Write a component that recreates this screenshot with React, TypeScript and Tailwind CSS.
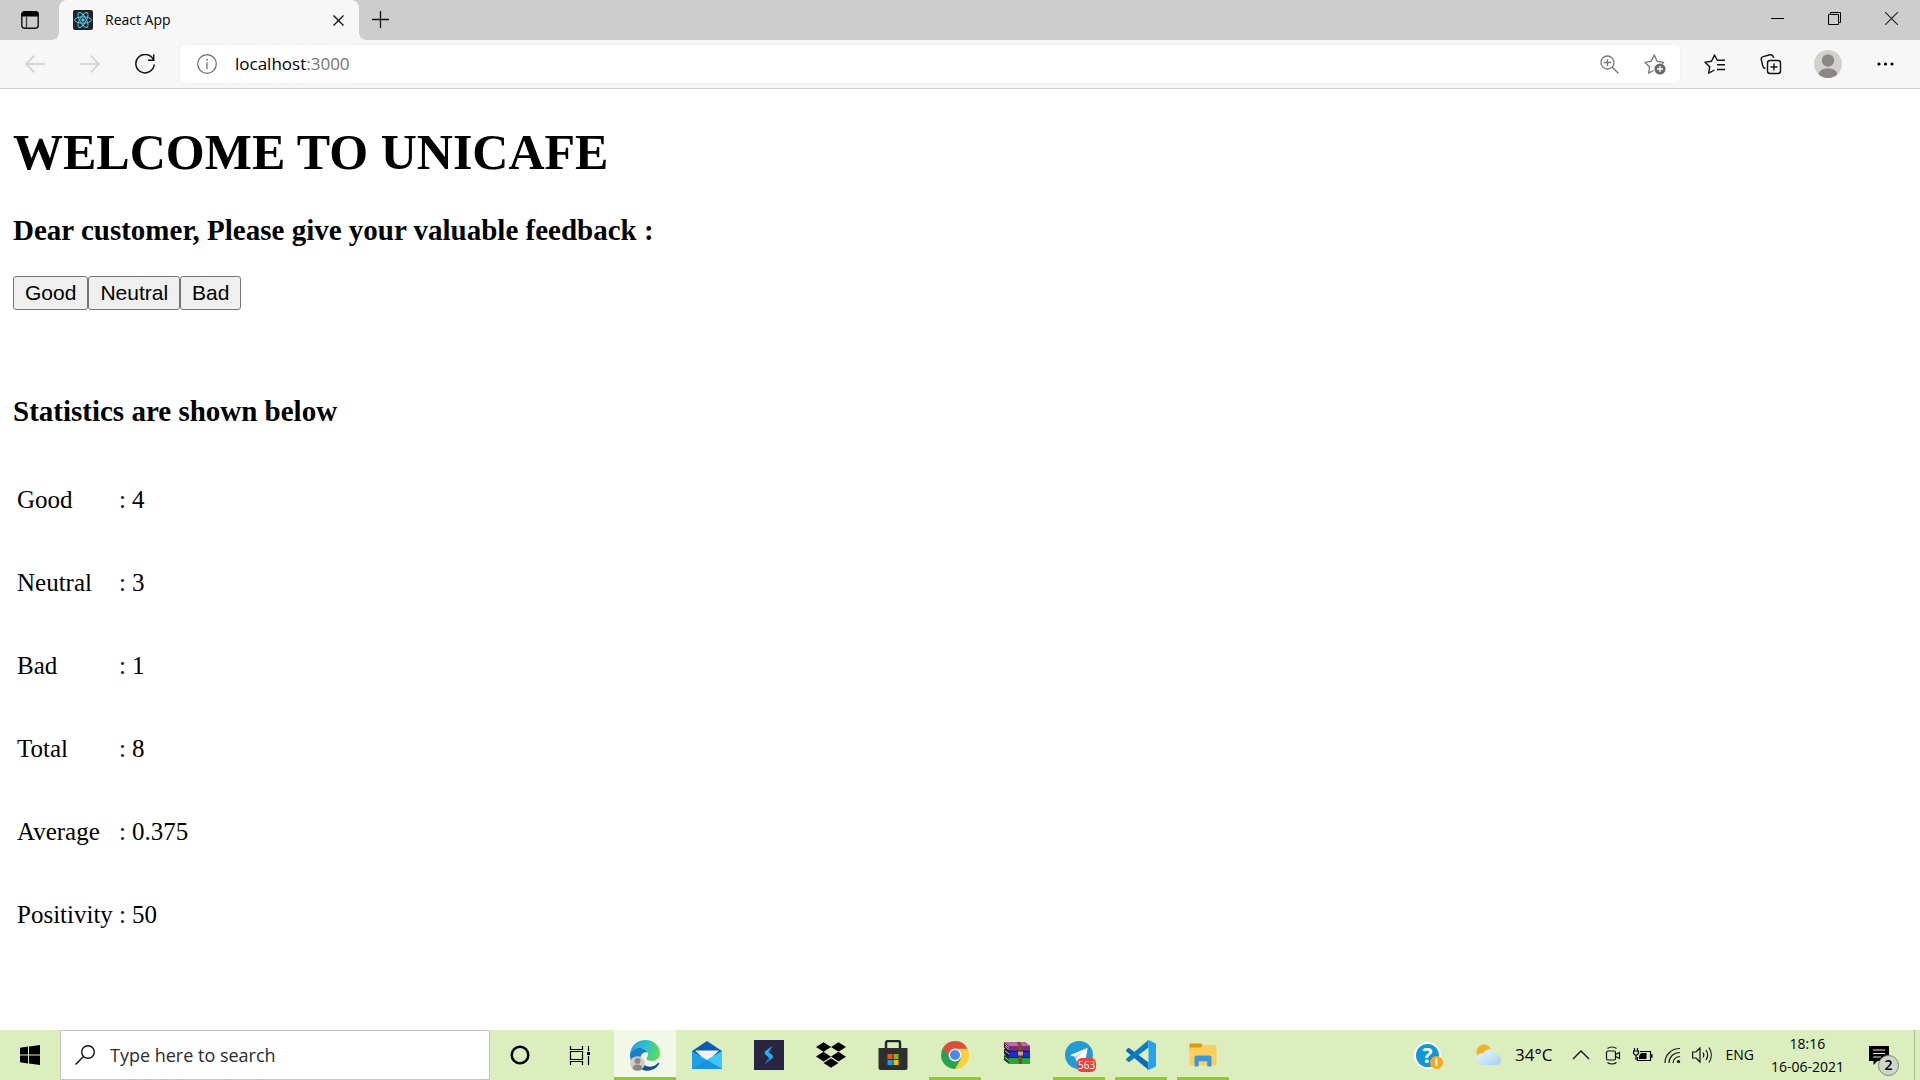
import React, { useState } from "react";
import type { ReactNode } from "react";
import { FaDropbox } from "react-icons/fa";

const ui = "font-['Open_Sans','Noto_Sans',sans-serif]";

function ReactLogo() {
  return (
    <svg width="20" height="20" viewBox="0 0 20 20" fill="none" stroke="#5ac8e6" strokeWidth="1" aria-hidden="true">
      <rect width="20" height="20" rx="2" fill="#20232a" stroke="none" />
      <ellipse cx="10" cy="10" rx="8.4" ry="3.2" />
      <ellipse cx="10" cy="10" rx="8.4" ry="3.2" transform="rotate(60 10 10)" />
      <ellipse cx="10" cy="10" rx="8.4" ry="3.2" transform="rotate(120 10 10)" />
      <circle cx="10" cy="10" r="1.7" fill="#5ac8e6" stroke="none" />
    </svg>
  );
}

function TabStrip() {
  return (
    <header className="flex h-10 items-start bg-[#cdcdcd]">
      <button aria-label="Tab actions" className="flex h-10 w-[59px] items-center justify-center">
        <svg width="18" height="18" viewBox="0 0 18 18" fill="none" aria-hidden="true">
          <rect x="0.8" y="0.8" width="16.4" height="16.4" rx="2.6" stroke="#111" strokeWidth="1.4" />
          <path d="M.5 5.5V3A2.5 2.5 0 0 1 3 .5h12A2.5 2.5 0 0 1 17.500 3v2.500z" fill="#000" />
          <path d="M5.500 5.500V17" stroke="#333" strokeWidth="1.200" />
        </svg>
      </button>
      <div className="relative flex h-10 w-[300px] items-center rounded-t-lg bg-[#f7f7f7] pr-[15px] pl-[14px]">
        <span className="absolute bottom-0 -left-1.5 size-1.5 bg-[radial-gradient(circle_at_0_0,transparent_5px,#f7f7f7_6px)]" />
        <span className="absolute -right-1.5 bottom-0 size-1.5 bg-[radial-gradient(circle_at_100%_0,transparent_5px,#f7f7f7_6px)]" />
        <ReactLogo />
        <span className="ml-3 flex-1 text-[14px] leading-5 text-black">React App</span>
        <button aria-label="Close tab" className="flex size-3 items-center justify-center">
          <svg width="11" height="11" viewBox="0 0 11 11" stroke="#111" strokeWidth="1.4" aria-hidden="true">
            <path d="M.5.5l10 10M10.500.5l-10 10" />
          </svg>
        </button>
      </div>
      <button aria-label="New tab" className="flex h-[39px] w-[43px] items-center justify-center">
        <svg width="17" height="17" viewBox="0 0 17 17" stroke="#111" strokeWidth="1.300" aria-hidden="true">
          <path d="M8.500 0v17M0 8.500h17" />
        </svg>
      </button>
      <div className="ml-auto flex h-[37px]">
        <button aria-label="Minimize" className="flex w-[57px] items-center justify-center">
          <svg width="13" height="13" viewBox="0 0 13 13" stroke="#000" aria-hidden="true"><path d="M0 6.500h13" /></svg>
        </button>
        <button aria-label="Restore" className="flex w-[57px] items-center justify-center">
          <svg width="13" height="13" viewBox="0 0 13 13" stroke="#000" fill="none" aria-hidden="true">
            <path d="M.5 2.500h10v10h-10zM2.500 2.500v-2h10v10h-2" />
          </svg>
        </button>
        <button aria-label="Close window" className="flex w-[57px] items-center justify-center">
          <svg width="13" height="13" viewBox="0 0 13 13" stroke="#222" strokeWidth="1.1" aria-hidden="true">
            <path d="M0 0l13 13M13 0L0 13" />
          </svg>
        </button>
      </div>
    </header>
  );
}

function ToolButton({ label, children, wide }: { label: string; children: ReactNode; wide?: boolean }) {
  return (
    <button aria-label={label} className={wide ? "flex h-full w-14 items-center justify-center" : "flex h-full w-[55px] items-center justify-center"}>
      {children}
    </button>
  );
}

function Toolbar() {
  return (
    <nav aria-label="Browser toolbar" className="flex h-[49px] items-center border-b border-[#cfcfcf] bg-[#f7f7f7] px-[7px]">
      <ToolButton label="Back">
        <svg width="20" height="18" viewBox="0 0 20 18" fill="none" stroke="#cbcbcb" strokeWidth="1.300" aria-hidden="true">
          <path d="M9.500.5L1 9l8.500 8.500M1 9h19" />
        </svg>
      </ToolButton>
      <ToolButton label="Forward">
        <svg width="20" height="18" viewBox="0 0 20 18" fill="none" stroke="#cbcbcb" strokeWidth="1.300" aria-hidden="true">
          <path d="M10.500.5L19 9l-8.500 8.500M19 9H0" />
        </svg>
      </ToolButton>
      <ToolButton label="Refresh">
        <svg width="20" height="20" viewBox="0 0 20 20" fill="none" stroke="#111" strokeWidth="1.500" aria-hidden="true">
          <path d="M18.500 6A9.200 9.200 0 1 0 19.200 10.500M18.700 0.500V6.200H13" />
        </svg>
      </ToolButton>
      <div className="mr-[7px] ml-2 flex h-[38px] min-w-0 flex-1 items-center rounded-[5px] bg-white pr-[14px] pl-[17px] shadow-[0_0_3px_rgba(0,0,0,0.06)]">
        <svg width="20" height="20" viewBox="0 0 20 20" fill="none" stroke="#666" strokeWidth="1.200" aria-hidden="true">
          <circle cx="10" cy="10" r="9.300" />
          <path d="M10 8.500v6.500" />
          <circle cx="10" cy="5.700" r="0.900" fill="#666" stroke="none" />
        </svg>
        <a href="#" aria-label="Address localhost:3000" className="ml-[18px] flex-1 text-[17px] leading-6 text-black">
          localhost<span className="text-[#767676]">:3000</span>
        </a>
        <button aria-label="Zoom">
          <svg width="19" height="19" viewBox="0 0 19 19" fill="none" stroke="#777" strokeWidth="1.300" aria-hidden="true">
            <circle cx="7.500" cy="7.500" r="6.500" />
            <path d="M12.300 12.300l6 6M7.500 4v7M4 7.500h7" />
          </svg>
        </button>
        <button aria-label="Add to favorites" className="ml-[25px]">
          <svg width="22" height="22" viewBox="0 0 22 22" fill="none" stroke="#777" strokeWidth="1.300" strokeLinejoin="round" aria-hidden="true">
            <path d="M9.500 17.500l-4.900 2.600 1-6.100L1 9.300l6-.9L10.300 2l2.900 6.400 6.500.9-1.500 1.400" />
            <circle cx="16" cy="16" r="5.600" fill="#6b6b6b" stroke="none" />
            <path d="M16 13v6M13 16h6" stroke="#fff" />
          </svg>
        </button>
      </div>
      <ToolButton label="Favorites" wide>
        <svg width="22" height="22" viewBox="0 0 22 22" fill="none" stroke="#111" strokeWidth="1.400" strokeLinejoin="round" aria-hidden="true">
          <path d="M10.500 17l-5.900 3.200 1.100-6.500L1 9.200l6.500-.9L10.500 2l2.900 5.300M13 7.300h8M13 11.800h8M13 16.500h8" />
        </svg>
      </ToolButton>
      <ToolButton label="Collections" wide>
        <svg width="22" height="22" viewBox="0 0 22 22" fill="none" stroke="#111" strokeWidth="1.400" aria-hidden="true">
          <rect x="7.500" y="7.500" width="13" height="13" rx="2.500" />
          <path d="M14 10.500v7M10.500 14h7M5.500 15.500c-1.600-.2-2.200-1-2.600-2.300L1.300 6.800C.9 5.200 1.700 4 3.200 3.600L10 1.800c1.600-.4 2.900.3 3.400 2.200l.2.900" />
        </svg>
      </ToolButton>
      <button aria-label="Profile" className="flex h-full w-[58px] items-center justify-center">
        <svg width="28" height="28" viewBox="0 0 28 28" aria-hidden="true">
          <defs><clipPath id="profileClip"><circle cx="14" cy="14" r="14" /></clipPath></defs>
          <g clipPath="url(#profileClip)">
            <rect width="28" height="28" fill="#d3d1cd" />
            <circle cx="14" cy="10.500" r="6.200" fill="#8c8783" />
            <path d="M4 28c0-6 3-9.800 10-9.800S24 22 24 28z" fill="#8c8783" />
          </g>
        </svg>
      </button>
      <ToolButton label="Settings and more" wide>
        <svg width="17" height="4" viewBox="0 0 17 4" aria-hidden="true">
          <circle cx="2" cy="2" r="1.600" /><circle cx="8.500" cy="2" r="1.600" /><circle cx="15" cy="2" r="1.600" />
        </svg>
      </ToolButton>
    </nav>
  );
}

const feedbackClass =
  "h-[34px] rounded-[3px] border border-[#767676] bg-[#efefef] px-[11px] font-['Liberation_Sans',Arial,sans-serif] text-[21px] leading-6";

function Unicafe() {
  const [good, setGood] = useState(4);
  const [neutral, setNeutral] = useState(3);
  const [bad, setBad] = useState(1);
  const total = good + neutral + bad;
  const stats: [string, number][] = [
    ["Good", good],
    ["Neutral", neutral],
    ["Bad", bad],
    ["Total", total],
    ["Average", (good - bad) / total],
    ["Positivity", (good / total) * 100],
  ];
  return (
    <main className="flex-1 bg-white px-[13px] pt-[34px] pb-12 font-['Liberation_Serif','Times_New_Roman',serif] text-black">
      <h1 className="text-[50px] leading-[58px] font-bold">WELCOME TO UNICAFE</h1>
      <h3 className="mt-[33px] text-[29px] leading-[33px] font-bold">Dear customer, Please give your valuable feedback :</h3>
      <div className="mt-[29px] flex">
        <button className={feedbackClass} onClick={() => setGood(good + 1)}>Good</button>
        <button className={feedbackClass} onClick={() => setNeutral(neutral + 1)}>Neutral</button>
        <button className={feedbackClass} onClick={() => setBad(bad + 1)}>Bad</button>
      </div>
      <h3 className="mt-[85px] text-[29px] leading-[33px] font-bold">Statistics are shown below</h3>
      <table className="mt-[30px] text-[25px] leading-[29px]">
        <tbody>
          {stats.map(([name, value]) => (
            <tr key={name}>
              <th scope="row" className="py-[27px] pl-1 text-left font-normal">{name}</th>
              <td className="py-[27px] pl-1.5">: {value}</td>
            </tr>
          ))}
        </tbody>
      </table>
    </main>
  );
}

function EdgeIcon() {
  return (
    <svg width="32" height="32" viewBox="0 0 32 32" aria-hidden="true">
      <defs>
        <linearGradient id="edgeTop" x1="0" y1="0.3" x2="1" y2="0.6">
          <stop offset="0" stopColor="#259fdc" /><stop offset="0.5" stopColor="#31c4c4" /><stop offset="1" stopColor="#62dc52" />
        </linearGradient>
      </defs>
      <path d="M1 15C2 6 8.500 1 16.500 1 25 1 31 7 31 14c0 5-3.500 8-8 8-3.500 0-5.500-1.300-5.500-2.500 0-1 1.500-1.500 1.500-4C19 12 16 9 11 9 6 9 2 11.500 1 15z" fill="url(#edgeTop)" />
      <path d="M1 15c1-3.500 4.800-6 9.500-6 4 0 7 2 8 4.500-4-1-7 2-7 6 0 6 5.500 11 10 11.300C18 32 15 31.500 12 30.500 5 28 .5 22 1 15z" fill="#1680d0" />
      <path d="M11.500 18c-.5 7 6 10.500 11 9.500 3-.5 5-2 6.500-3.500 1-.8 1.500.2 1 1C27.500 29.500 22.500 32 17 31.500c-6-.5-9-7-5.500-13.500z" fill="#0c4f9c" />
      <circle cx="8.500" cy="24.500" r="7.300" fill="#cfcdca" />
      <circle cx="8.500" cy="22" r="3" fill="#8c8783" />
      <path d="M3.500 29.700c.3-3 2-4.200 5-4.200s4.700 1.200 5 4.200a7.300 7.300 0 0 1-10 0z" fill="#8c8783" />
    </svg>
  );
}

function MailIcon() {
  return (
    <svg width="30" height="30" viewBox="0 0 30 30" aria-hidden="true">
      <path d="M0 11L15 1l15 10v5H0z" fill="#0a5cb2" />
      <path d="M3 10.500h24L15 22z" fill="#f2f2f2" />
      <path d="M0 11v18h30V11L15 20z" fill="#1ea0e8" />
      <path d="M30 11v18L15 20z" fill="#3dc8f5" />
      <path d="M0 29l15-9 15 9z" fill="#1d93df" />
    </svg>
  );
}

function BoltIcon() {
  return (
    <svg width="30" height="30" viewBox="0 0 30 30" aria-hidden="true">
      <rect width="30" height="30" fill="#292541" />
      <path d="M18.500 6l-7 5c-1.500 1.500-1 3 .5 4l3 2.500-4 6.500 6.500-5c2-1.700 2-3 0-4.500L15 12.500z" fill="#28b3ef" />
      <path d="M18.500 6l-4.500 5.500 1 1zM11 24l3.500-5.500 1-1 1 2z" fill="#2a62c4" />
    </svg>
  );
}

function StoreIcon() {
  return (
    <svg width="30" height="30" viewBox="0 0 30 30" aria-hidden="true">
      <path d="M8 10V3a2 2 0 0 1 2-2h10a2 2 0 0 1 2 2v7" fill="none" stroke="#1f2a2a" strokeWidth="2.500" />
      <path d="M.5 8h29v20a2 2 0 0 1-2 2h-25a2 2 0 0 1-2-2z" fill="#2e2e2e" />
      <path d="M9.500 14h5v5h-5z" fill="#f25022" /><path d="M15.500 14h5v5h-5z" fill="#7fba00" />
      <path d="M9.500 20h5v5h-5z" fill="#00a4ef" /><path d="M15.500 20h5v5h-5z" fill="#ffb900" />
    </svg>
  );
}

function ChromeIcon() {
  return (
    <svg width="28" height="28" viewBox="0 0 28 28" aria-hidden="true">
      <circle cx="14" cy="14" r="14" fill="#fbce3b" />
      <path d="M14 14L1.900 7A14 14 0 0 0 14 28l6-10.500z" fill="#27a152" />
      <path d="M14 7.700h12.500A14 14 0 0 0 1.900 7L8.500 17.200z" fill="#d94f40" />
      <circle cx="14" cy="14" r="6.400" fill="#f5f5f5" />
      <circle cx="14" cy="14" r="5" fill="#4a88ef" />
    </svg>
  );
}

function WinrarIcon() {
  return (
    <svg width="28" height="28" viewBox="0 0 28 28" aria-hidden="true">
      <path d="M1 1h21l5 4v5H6L1 6z" fill="#7e2a78" /><path d="M1 1h21l5 4H6z" fill="#b868b0" />
      <path d="M1 8h5v9H3z" fill="#162055" /><path d="M6 10h21v6H6z" fill="#1a2cd8" />
      <path d="M1 14l5 2v7l-5-4z" fill="#0c4d20" /><path d="M6 16.500h21V23H6z" fill="#1fae35" />
      <path d="M1 2l5 4v4L1 7zM1 9l5 4v3l-5-3z" fill="#2b1535" />
      <path d="M2 3.500l4 3M2 5.500l4 3M2 10l4 3M2 16.500l4 3" stroke="#ded8d8" strokeWidth="0.900" />
      <path d="M6 10.300h21M6 16.600h21" stroke="#101030" />
      <path d="M14 1h3l2 4v18h-3.500V5z" fill="#7a4d20" />
      <rect x="14.500" y="10" width="6" height="5" fill="#c1a780" stroke="#3b250f" />
    </svg>
  );
}

function TelegramIcon() {
  return (
    <span className="relative block size-7">
      <svg width="28" height="28" viewBox="0 0 28 28" aria-hidden="true">
        <circle cx="14" cy="14" r="14" fill="#269bd3" />
        <path d="M5 14.200L21.500 7.300c.8-.3 1.200.1 1 1L20 20.500c-.2.900-.8 1.100-1.500.6l-4-3-2 2c-.5.500-1 .4-1.200-.3L10 15.800z" fill="#fff" />
        <path d="M10 15.800l9-6-7 7-.7 3z" fill="#bcd9ec" />
      </svg>
      <span className="absolute top-[17px] left-3 rounded-[5px] bg-[#f23c34] px-[1px] text-[10px] leading-[14px] text-white">563</span>
    </span>
  );
}

function CodeIcon() {
  return (
    <svg width="30" height="30" viewBox="0 0 30 30" aria-hidden="true">
      <path d="M0 10.200l2-1.900c.5-.4 1-.4 1.500-.1L22.500 22.500V30L.2 11.300c-.3-.3-.4-.8-.2-1.100z" fill="#0b6db5" />
      <path d="M0 19.800l2 1.900c.5.4 1 .4 1.500.1L22.500 7.500V0L.2 18.700c-.3.300-.4.800-.2 1.100z" fill="#0d7dc9" />
      <path d="M22.500 0L29 3c.6.300 1 .9 1 1.600v20.800c0 .7-.4 1.300-1 1.600L22.500 30c-.8.200-1.500 0-2-.5.800.8 2 .2 2-.8V1.300c0-1-1.200-1.600-2-.8.500-.5 1.200-.7 2-.5z" fill="#26a1ee" />
    </svg>
  );
}

function ExplorerIcon() {
  return (
    <svg width="28" height="24" viewBox="0 0 28 24" aria-hidden="true">
      <path d="M.5 1.500a1 1 0 0 1 1-1H12l1.500 1.500V7H.5z" fill="#dc9a06" />
      <path d="M.5 4.500H12l2.500-2.500H26a1.500 1.500 0 0 1 1.500 1.500v19H.5z" fill="#fccf5c" />
      <path d="M5.500 23.500v-9a2 2 0 0 1 2-2h13a2 2 0 0 1 2 2v9h-4.200v-5.200H9.700v5.200z" fill="#3d95dc" />
    </svg>
  );
}

const apps: { name: string; icon: ReactNode; open?: boolean; active?: boolean }[] = [
  { name: "Microsoft Edge", icon: <EdgeIcon />, open: true, active: true },
  { name: "Mail", icon: <MailIcon /> },
  { name: "Shortcut tool", icon: <BoltIcon /> },
  { name: "Dropbox", icon: <FaDropbox size={30} color="#000" /> },
  { name: "Microsoft Store", icon: <StoreIcon /> },
  { name: "Google Chrome", icon: <ChromeIcon />, open: true },
  { name: "WinRAR", icon: <WinrarIcon /> },
  { name: "Telegram", icon: <TelegramIcon />, open: true },
  { name: "Visual Studio Code", icon: <CodeIcon />, open: true },
  { name: "File Explorer", icon: <ExplorerIcon />, open: true },
];

function Taskbar() {
  return (
    <footer className={`flex h-[50px] shrink-0 items-center bg-[#dceebe] text-black ${ui}`}>
      <button aria-label="Start" className="flex h-full w-[60px] items-center justify-center">
        <svg width="20" height="20" viewBox="0 0 20 20" aria-hidden="true">
          <path d="M0 2.800L8 1.500v8H0zM9 1.400L20 0v9.500H9zM0 10.500h8v8L0 17.300zM9 10.500h11V20L9 18.600z" />
        </svg>
      </button>
      <label className="flex h-full w-[430px] items-center border border-[#c5c5c5] bg-white pl-[14px]">
        <svg width="20" height="20" viewBox="0 0 20 20" fill="none" stroke="#111" strokeWidth="1.400" aria-hidden="true">
          <circle cx="13" cy="7" r="6.300" /><path d="M8.500 11.500L.5 19.500" />
        </svg>
        <input type="text" aria-label="Search" placeholder="Type here to search" className="ml-[15px] min-w-0 flex-1 text-[18px] leading-6 outline-none placeholder:text-[#2c2c2c]" />
      </label>
      <button aria-label="Cortana" className="flex h-full w-[60px] items-center justify-center">
        <svg width="20" height="20" viewBox="0 0 20 20" fill="none" aria-hidden="true"><circle cx="10" cy="10" r="8.300" stroke="#000" strokeWidth="2.500" /></svg>
      </button>
      <button aria-label="Task view" className="mr-1 flex h-full w-[60px] items-center justify-center">
        <svg width="22" height="19" viewBox="0 0 22 19" fill="none" stroke="#000" strokeWidth="1.200" aria-hidden="true">
          <path d="M1.500 0v3.500h12V0M1.500 19v-3.500h12V19M1.500 5.500h12v8h-12zM19.500 0v5M19.500 10v9" />
          <path d="M18 6h3v3h-3z" fill="#000" stroke="none" />
        </svg>
      </button>
      <div className="flex h-full">
        {apps.map((app) => (
          <button
            key={app.name}
            aria-label={app.name}
            className={app.active ? "relative flex h-full w-[62px] items-center justify-center bg-[#f2f8e7]" : "relative flex h-full w-[62px] items-center justify-center"}
          >
            {app.icon}
            {app.open && (
              <span className={app.active ? "absolute inset-x-0 bottom-0 h-[3px] bg-[#8ace28]" : "absolute inset-x-[5px] bottom-0 h-[3px] bg-[#8ace28]"} />
            )}
          </button>
        ))}
      </div>
      <div className="ml-auto flex h-full items-center">
        <button aria-label="Help" className="relative mr-[35px] flex size-[27px] items-center justify-center rounded-full border-2 border-white bg-[#0f98d8] text-[21px] leading-6 font-bold text-white">
          ?
          <span className="absolute -right-1 -bottom-0.5 flex size-[13px] items-center justify-center rounded-full bg-[#f5a81c] text-[11px] leading-3 font-bold text-white">i</span>
        </button>
        <button className="mr-5 flex items-center gap-[13px] text-[17px] leading-6">
          <svg width="26" height="22" viewBox="0 0 26 22" aria-hidden="true">
            <defs><linearGradient id="cloud" x1="0" y1="0" x2="1" y2="1"><stop offset="0" stopColor="#eef7fd" /><stop offset="1" stopColor="#a5cfef" /></linearGradient></defs>
            <circle cx="8" cy="8" r="7.500" fill="#f6b024" />
            <path d="M7 21a6 6 0 0 1-1-12h1.500A7 7 0 0 1 20.500 11 5 5 0 0 1 20.500 21z" fill="url(#cloud)" />
          </svg>
          34°C
        </button>
        <button aria-label="Show hidden icons" className="mr-[15px]">
          <svg width="18" height="10" viewBox="0 0 18 10" fill="none" stroke="#111" strokeWidth="1.300" aria-hidden="true"><path d="M1 9l8-8 8 8" /></svg>
        </button>
        <button aria-label="Meet Now" className="mr-3">
          <svg width="16" height="19" viewBox="0 0 16 19" fill="none" stroke="#111" strokeWidth="1.200" aria-hidden="true">
            <rect x="1.500" y="5" width="9" height="9" rx="1.500" />
            <path d="M10.500 8.500l4-2v6l-4-2M2.500 2.500C5 .5 9 .5 11.500 2.500M2.500 16.500c2.500 2 6.500 2 9 0" />
          </svg>
        </button>
        <button aria-label="Battery charging" className="mr-[11px]">
          <svg width="20" height="15" viewBox="0 0 20 15" fill="none" stroke="#000" strokeWidth="1.200" aria-hidden="true">
            <path d="M7 3.500h10.500v9h-13V9M18.900 6v4M1.500 0v3M4.500 0v3M3 7v5" />
            <path d="M.5 3h5v2.500L4 7H2L.5 5.500z" />
            <path d="M8 5h5.500v6H6V8z" fill="#000" stroke="none" />
          </svg>
        </button>
        <button aria-label="Wi-Fi" className="mr-[11px]">
          <svg width="17" height="17" viewBox="0 0 17 17" fill="none" stroke="#222" strokeWidth="1.200" aria-hidden="true">
            <path d="M1 16C1 8 7 1.500 16 1.500M5 16c0-6 4.500-10.500 11-10.500M9 16c0-3.500 3-6.500 7-6.500" />
            <circle cx="14.500" cy="14.500" r="1.600" fill="#000" stroke="none" />
          </svg>
        </button>
        <button aria-label="Volume" className="mr-3">
          <svg width="21" height="18" viewBox="0 0 21 18" fill="none" stroke="#111" strokeWidth="1.200" aria-hidden="true">
            <path d="M.6 6h3.400l4-4v14l-4-4H.6zM11 6.500c1 1.500 1 3.500 0 5M14 4c2 3 2 7 0 10M17 1.500c3 4.500 3 10.500 0 15" />
          </svg>
        </button>
        <button className="mr-[17px] text-[14px] leading-5">ENG</button>
        <button className="mr-[25px] text-center text-[14px] leading-[23px]">18:16<br />16-06-2021</button>
        <button aria-label="2 notifications" className="relative mr-[25px] block h-[19px] w-5">
          <svg width="20" height="19" viewBox="0 0 20 19" aria-hidden="true">
            <path d="M0 0h20v15H8.500L4.500 19v-4H0z" />
            <path d="M4 4h12M4 7.500h12M4 11h8" stroke="#dceebe" strokeWidth="1.200" />
          </svg>
          <span className="absolute top-[9px] left-[9px] flex size-[21px] items-center justify-center rounded-full border border-[#808878] bg-[#cfd5c8] text-[14px] leading-4 font-semibold">2</span>
        </button>
        <button aria-label="Show desktop" className="h-full w-1.5 border-l border-[#a9b896]" />
      </div>
    </footer>
  );
}

export default function App() {
  return (
    <div className={`flex min-h-screen flex-col bg-white ${ui}`}>
      <TabStrip />
      <Toolbar />
      <Unicafe />
      <Taskbar />
    </div>
  );
}
